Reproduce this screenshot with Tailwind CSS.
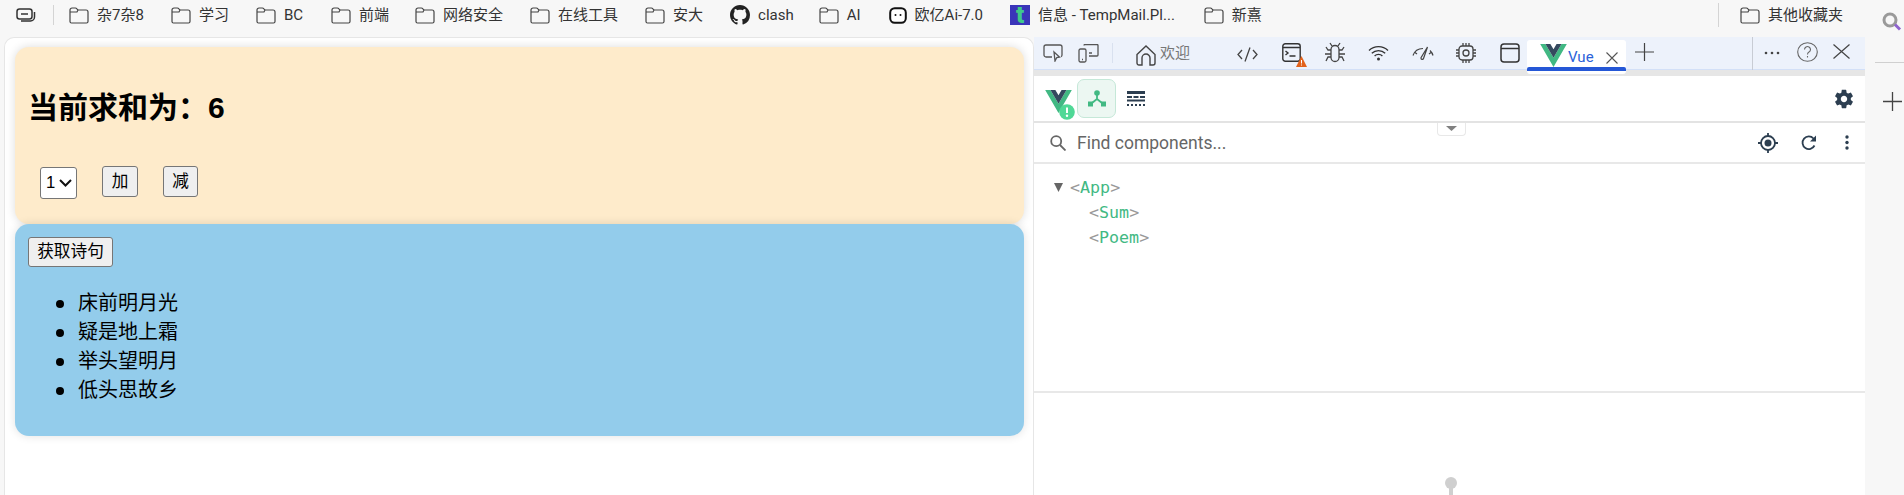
<!DOCTYPE html>
<html lang="zh-CN">
<head>
  <meta charset="UTF-8">
  <title>求和 - DevTools</title>
  <script src="https://cdn.jsdelivr.net/npm/@tailwindcss/browser@4"></script>
</head>
<body class="bg-[#f7f7f7]">
  <svg class="hidden">
    <symbol id="folder" viewBox="0 0 20 17">
      <path d="M1 5V3a2 2 0 0 1 2-2h3.300a2 2 0 0 1 1.600.8L9 3h8a2 2 0 0 1 2 2v9.500a1.500 1.500 0 0 1-1.500 1.500h-15A1.500 1.500 0 0 1 1 14.500zM1 5h7l1-2" fill="none" stroke="#444" stroke-width="1.200"/>
    </symbol>
  </svg>

  <div class="w-[1904px] h-[495px] overflow-hidden flex flex-col font-['Roboto','Noto_Sans_CJK_SC',sans-serif]">

    <!-- bookmarks -->
    <div class="h-[37px] shrink-0 flex items-center pb-[7px] text-[15px] leading-[20px] text-[#333]">
      <svg class="ml-[16px]" width="20" height="15" viewBox="0 0 20 15" fill="none" stroke="#333" stroke-width="1.500"><rect x="1" y="1" width="15" height="10" rx="2.500"/><path d="M5 6h7"/><path d="M18.500 4v5a4 4 0 0 1-4 4H5"/></svg>
      <div class="ml-[17px] w-px h-[20px] bg-[#d4d4d4]"></div>
      <div class="ml-[15px] flex items-center gap-[8px]"><svg width="20" height="17"><use href="#folder"/></svg><span>杂7杂8</span></div>
      <div class="ml-[27px] flex items-center gap-[8px]"><svg width="20" height="17"><use href="#folder"/></svg><span>学习</span></div>
      <div class="ml-[27px] flex items-center gap-[8px]"><svg width="20" height="17"><use href="#folder"/></svg><span>BC</span></div>
      <div class="ml-[28px] flex items-center gap-[8px]"><svg width="20" height="17"><use href="#folder"/></svg><span>前端</span></div>
      <div class="ml-[26px] flex items-center gap-[8px]"><svg width="20" height="17"><use href="#folder"/></svg><span>网络安全</span></div>
      <div class="ml-[27px] flex items-center gap-[8px]"><svg width="20" height="17"><use href="#folder"/></svg><span>在线工具</span></div>
      <div class="ml-[27px] flex items-center gap-[8px]"><svg width="20" height="17"><use href="#folder"/></svg><span>安大</span></div>
      <div class="ml-[27px] flex items-center gap-[8px]">
        <svg width="20" height="20" viewBox="0 0 16 16" fill="#222"><path d="M8 0C3.580 0 0 3.580 0 8c0 3.540 2.290 6.530 5.470 7.590.4.070.55-.17.55-.38 0-.19-.01-.82-.01-1.490-2.010.37-2.530-.49-2.690-.94-.09-.23-.48-.94-.82-1.130-.28-.15-.68-.52-.01-.53.63-.01 1.080.58 1.230.82.72 1.210 1.870.87 2.330.66.07-.52.28-.87.51-1.070-1.780-.2-3.640-.89-3.640-3.950 0-.87.31-1.590.82-2.150-.08-.2-.36-1.020.08-2.120 0 0 .67-.21 2.200.82.64-.18 1.320-.27 2-.27.68 0 1.360.09 2 .27 1.530-1.040 2.200-.82 2.200-.82.44 1.100.16 1.920.08 2.120.51.56.82 1.270.82 2.150 0 3.070-1.870 3.750-3.650 3.950.29.25.54.73.54 1.480 0 1.070-.01 1.930-.01 2.200 0 .21.15.46.55.38A8.013 8.013 0 0 0 16 8c0-4.420-3.580-8-8-8z"/></svg>
        <span>clash</span>
      </div>
      <div class="ml-[25px] flex items-center gap-[8px]"><svg width="20" height="17"><use href="#folder"/></svg><span>AI</span></div>
      <div class="ml-[28px] flex items-center gap-[8px]">
        <svg width="18" height="17" viewBox="0 0 18 17"><rect x="1.200" y="1.200" width="15.600" height="14.600" rx="4.500" fill="#fff" stroke="#111" stroke-width="2"/><circle cx="6.500" cy="8" r="1" fill="#111"/><circle cx="11.500" cy="8" r="1" fill="#111"/></svg>
        <span>欧亿Ai-7.0</span>
      </div>
      <div class="ml-[27px] flex items-center gap-[8px]">
        <div class="w-[20px] h-[20px] bg-[#3a35b9] flex items-center justify-center text-[#3fc98a] font-black text-[24px] leading-[20px]">t</div>
        <span>信息 - TempMail.Pl...</span>
      </div>
      <div class="ml-[29px] flex items-center gap-[8px]"><svg width="20" height="17"><use href="#folder"/></svg><span>新熹</span></div>
      <div class="ml-auto w-px h-[24px] bg-[#d4d4d4]"></div>
      <div class="ml-[21px] mr-[61px] flex items-center gap-[8px]"><svg width="20" height="17"><use href="#folder"/></svg><span>其他收藏夹</span></div>
    </div>

    <div class="flex-1 flex min-h-0">
      <!-- page -->
      <div class="ml-[4px] w-[1030px] shrink-0 bg-white border border-b-0 border-[#e6e6e6] rounded-t-[10px] pl-[10px] pt-[9px] font-['Liberation_Sans','Noto_Sans_CJK_SC',sans-serif] text-black">
        <div class="w-[1009px] h-[177px] bg-[#feebcb] rounded-[14px] shadow-[0_0_10px_rgba(0,0,0,0.14)] pl-[13px] pt-[43px]">
          <h2 class="text-[30px] leading-[36px] font-bold">当前求和为：6</h2>
          <div class="mt-[40px] ml-[12px] flex items-start text-[16.670px]">
            <div class="relative w-[37px] h-[32px] mt-[1px]">
              <select class="appearance-none w-full h-full bg-white border border-[#767676] rounded-[3px] pl-[5px] leading-[28px]"><option>1</option></select>
              <svg class="absolute right-[5px] top-[12px]" width="13" height="8" viewBox="0 0 13 8" fill="none" stroke="#111" stroke-width="2"><path d="M1 1l5.500 5.500L12 1"/></svg>
            </div>
            <button class="ml-[25px] w-[36px] h-[31px] bg-[#efefef] border border-[#767676] rounded-[3px] leading-[28px]">加</button>
            <button class="ml-[25px] w-[35px] h-[31px] bg-[#efefef] border border-[#767676] rounded-[3px] leading-[28px]">减</button>
          </div>
        </div>
        <div class="w-[1009px] h-[212px] bg-[#93cceb] rounded-[14px] shadow-[0_0_10px_rgba(0,0,0,0.12)] pl-[13px] pt-[13px]">
          <button class="block w-[85px] h-[30px] bg-[#efefef] border border-[#767676] rounded-[3px] text-[16.670px] leading-[28px]">获取诗句</button>
          <ul class="mt-[22px] pl-[28px] text-[20px] leading-[29px]">
            <li class="flex items-center gap-[14px]"><span class="w-[8px] h-[8px] rounded-full bg-black"></span>床前明月光</li>
            <li class="flex items-center gap-[14px]"><span class="w-[8px] h-[8px] rounded-full bg-black"></span>疑是地上霜</li>
            <li class="flex items-center gap-[14px]"><span class="w-[8px] h-[8px] rounded-full bg-black"></span>举头望明月</li>
            <li class="flex items-center gap-[14px]"><span class="w-[8px] h-[8px] rounded-full bg-black"></span>低头思故乡</li>
          </ul>
        </div>
      </div>

      <!-- devtools -->
      <div class="w-[831px] shrink-0 bg-white flex flex-col">
        <div class="h-[33px] shrink-0 bg-[#edf2fb] border-b border-[#d3e0f7] flex items-center text-[#444]">
          <svg class="ml-[9px]" width="20" height="18" viewBox="0 0 20 18" fill="none" stroke="#555" stroke-width="1.300"><path d="M9 13H3a2 2 0 0 1-2-2V3a2 2 0 0 1 2-2h14a2 2 0 0 1 2 2v8a2 2 0 0 1-1 1.700"/><path d="M11 8l5.500 5-2.700.5L12 17z"/></svg>
          <svg class="ml-[15px]" width="21" height="19" viewBox="0 0 21 19" fill="none" stroke="#555" stroke-width="1.300"><rect x="1" y="5" width="7" height="13" rx="1.500"/><path d="M4 15.500h1"/><path d="M6 1.500a1 1 0 0 1 1-1h12a1 1 0 0 1 1 1V11a1 1 0 0 1-1 1h-8M11 9h3"/></svg>
          <div class="ml-[13px] w-px h-[20px] bg-[#d9e1ef]"></div>
          <svg class="ml-[23px] mt-[4px]" width="20" height="21" viewBox="0 0 20 21" fill="none" stroke="#444" stroke-width="1.400"><path d="M1 9.500L10 1l9 8.500V18a2 2 0 0 1-2 2h-3v-7a3.500 3.500 0 0 0-8 0v7H3a2 2 0 0 1-2-2z"/></svg>
          <span class="ml-[4px] text-[15px] text-[#777] leading-[20px]">欢迎</span>
          <svg class="ml-[47px] mt-[3px]" width="21" height="15" viewBox="0 0 21 15" fill="none" stroke="#444" stroke-width="1.300"><path d="M5 3L1 7.500 5 12M16 3l4 4.500-4 4.500M13 .5L8 14.500"/></svg>
          <div class="ml-[24px] relative w-[25px] h-[24px] mt-[3px]">
            <svg width="19" height="19" viewBox="0 0 19 19" fill="none" stroke="#333" stroke-width="1.400"><rect x=".8" y=".8" width="17.400" height="17.400" rx="2.500"/><path d="M1 4.500h17M3.500 8l2.500 2-2.500 2M7.500 13h6"/></svg>
            <svg class="absolute left-[14px] top-[13px]" width="11" height="11" viewBox="0 0 11 11"><path d="M5.500 0L11 11H0z" fill="#e2621b"/><path d="M5.500 4v3.500M5.500 8.500v1" stroke="#fff"/></svg>
          </div>
          <svg class="ml-[17px]" width="22" height="22" viewBox="0 0 22 22" fill="none" stroke="#444" stroke-width="1.300"><path d="M7 7.500a4 4 0 0 1 8 0v8a4 4 0 0 1-8 0zM8 4L6 1M14 4l2-3M7 8H4L2 5M15 8h3l2-3M7 12H1M15 12h6M7 15H4l-2 4M15 15h3l2 4"/></svg>
          <svg class="ml-[22px]" width="21" height="16" viewBox="0 0 21 16" fill="none" stroke="#333" stroke-width="1.300"><path d="M1 5.500a13.500 13.500 0 0 1 19 0M3.800 8.300a9.500 9.500 0 0 1 13.400 0M6.600 11a5.500 5.500 0 0 1 7.800 0"/><circle cx="10.500" cy="14" r="1.500" fill="#333" stroke="none"/></svg>
          <svg class="ml-[23px]" width="22" height="15" viewBox="0 0 22 15" fill="none" stroke="#444" stroke-width="1.200"><path d="M1 9.500C2.500 5 6 2.500 11 2.500M21 9.500C20.500 7.500 19.500 6 18 4.500M3 6.500l2 1.500M19 6.500l-2 1.500M15.500 1L11.500 12.500a1.300 1.300 0 0 1-2.500-.7z"/></svg>
          <svg class="ml-[21px]" width="22" height="22" viewBox="0 0 22 22" fill="none" stroke="#444" stroke-width="1.300"><rect x="4" y="4" width="14" height="14" rx="3"/><circle cx="11" cy="11" r="3"/><path d="M8 1v3M11 1v3M14 1v3M8 18v3M11 18v3M14 18v3M1 8h3M1 11h3M1 14h3M18 8h3M18 11h3M18 14h3"/></svg>
          <svg class="ml-[23px]" width="20" height="20" viewBox="0 0 20 20" fill="none" stroke="#333" stroke-width="1.500"><rect x="1" y="1" width="18" height="18" rx="3"/><path d="M1 5.500h18"/></svg>
          <div class="ml-[7px] self-start mt-[3px] w-[99px] h-[34px] shrink-0 bg-white rounded-[3px] relative z-10 flex items-start">
            <svg class="ml-[13px] mt-[4px]" width="27" height="23" viewBox="0 0 256 221"><path d="M0 0l128 220.800L256 0h-51.200L128 132.480 50.560 0z" fill="#41b883"/><path d="M50.560 0L128 133.120 204.800 0h-47.360L128 51.200 97.920 0z" fill="#35495e"/></svg>
            <span class="ml-[1px] mt-[7px] text-[15px] leading-[20px] text-[#2b62d9]">Vue</span>
            <svg class="ml-[12px] mt-[12px]" width="12" height="12" viewBox="0 0 12 12" fill="none" stroke="#555" stroke-width="1.100"><path d="M.5.5l11 11M11.500.5l-11 11"/></svg>
            <div class="absolute left-0 right-0 top-[27px] h-[4px] bg-[#2557d6] rounded-t-[2px]"></div>
          </div>
          <svg class="ml-[9px] -mt-[3px]" width="19" height="18" viewBox="0 0 19 18" fill="none" stroke="#444" stroke-width="1.200"><path d="M9.500 0v18M0 9h19"/></svg>
          <div class="ml-[98px] w-px h-[33px] bg-[#c8ccd4]"></div>
          <svg class="ml-[11px] -mt-[1px]" width="16" height="4" viewBox="0 0 16 4" fill="#444"><circle cx="2" cy="2" r="1.300"/><circle cx="8" cy="2" r="1.300"/><circle cx="14" cy="2" r="1.300"/></svg>
          <svg class="ml-[17px] -mt-[3px]" width="21" height="20" viewBox="0 0 21 20" fill="none" stroke="#666" stroke-width="1.100"><ellipse cx="10.500" cy="10" rx="9.800" ry="9.300"/><path d="M7.500 7.500a3 3 0 1 1 4.500 2.600c-1 .6-1.500 1.200-1.500 2.400M10.500 14v1.500"/></svg>
          <svg class="ml-[15px] -mt-[3px]" width="17" height="15" viewBox="0 0 17 15" fill="none" stroke="#444" stroke-width="1.200"><path d="M.5.500l16 14M16.500.500l-16 14"/></svg>
        </div>
        <div class="h-[6px] shrink-0 bg-[#e6e6e6]"></div>

        <!-- vue toolbar -->
        <div class="h-[47px] shrink-0 border-b-2 border-[#e3e3e3] flex items-center relative">
          <div class="ml-[11px] mt-[5px] relative w-[27px] h-[23px]">
            <svg width="27" height="23" viewBox="0 0 256 221"><path d="M0 0l128 220.800L256 0h-51.200L128 132.480 50.560 0z" fill="#41b883"/><path d="M50.560 0L128 133.120 204.800 0h-47.360L128 51.200 97.920 0z" fill="#35495e"/></svg>
            <svg class="absolute left-[14px] top-[14px]" width="16" height="16" viewBox="0 0 16 16"><circle cx="8" cy="8" r="7.800" fill="#4fd896"/><path d="M8 3.500v5.500" stroke="#fff" stroke-width="2"/><circle cx="8" cy="11.800" r="1.200" fill="#fff"/></svg>
          </div>
          <div class="ml-[5px] w-[39px] h-[39px] rounded-[7px] bg-[#ecf7f2] border border-[#c5e8d8] flex items-center justify-center">
            <svg width="18" height="17" viewBox="0 0 18 17" fill="none"><circle cx="9" cy="3" r="2.800" fill="#42b983"/><path d="M9 4v5M9 9l-5 4M9 9l5 4" stroke="#42b983" stroke-width="1.800"/><rect x="0" y="11.500" width="5" height="5" fill="#42b983"/><rect x="13" y="11.500" width="5" height="5" fill="#42b983"/></svg>
          </div>
          <svg class="ml-[11px]" width="18" height="15" viewBox="0 0 18 15" fill="#2c3e50"><rect width="18" height="3"/><rect y="5" width="5" height="2"/><rect x="6.500" y="5" width="5" height="2"/><rect x="13" y="5" width="5" height="2"/><rect y="8.500" width="18" height="2"/><rect y="13" width="2" height="2"/><rect x="4" y="13" width="2" height="2"/><rect x="8" y="13" width="2" height="2"/><rect x="12" y="13" width="2" height="2"/><rect x="16" y="13" width="2" height="2"/></svg>
          <svg class="ml-auto mr-[10px]" width="22" height="22" viewBox="0 0 24 24" fill="#2c3e50"><path d="M19.430 12.980c.04-.32.070-.64.070-.98s-.03-.66-.07-.98l2.110-1.650c.19-.15.24-.42.12-.64l-2-3.460c-.12-.22-.39-.3-.61-.22l-2.490 1c-.52-.4-1.080-.73-1.690-.98l-.38-2.650A.488.488 0 0 0 14 2h-4c-.25 0-.46.18-.49.420l-.38 2.650c-.61.25-1.170.59-1.690.98l-2.490-1c-.23-.09-.49 0-.61.22l-2 3.460c-.13.22-.07.49.12.64l2.110 1.650c-.04.32-.07.65-.07.98s.03.66.07.98l-2.110 1.650c-.19.15-.24.42-.12.64l2 3.460c.12.22.39.3.61.22l2.490-1c.52.4 1.080.73 1.690.98l.38 2.650c.03.24.24.42.49.42h4c.25 0 .46-.18.49-.42l.38-2.650c.61-.25 1.170-.59 1.690-.98l2.490 1c.23.09.49 0 .61-.22l2-3.460c.12-.22.07-.49-.12-.64zM12 15.500c-1.930 0-3.500-1.570-3.500-3.500s1.570-3.500 3.500-3.500 3.500 1.570 3.500 3.500-1.570 3.500-3.500 3.500z"/></svg>
          <div class="absolute left-[403px] top-[47px] w-[29px] h-[13px] bg-white border border-t-0 border-[#e8e8e8] rounded-b-[4px] flex justify-center pt-[3px] z-10">
            <svg width="11" height="5" viewBox="0 0 11 5"><path d="M0 0h11L5.500 5z" fill="#808080"/></svg>
          </div>
        </div>

        <!-- search -->
        <div class="h-[41px] shrink-0 border-b-2 border-[#e8e8e8] flex items-center">
          <svg class="ml-[16px]" width="16" height="16" viewBox="0 0 16 16" fill="none" stroke="#666" stroke-width="1.800"><circle cx="6.200" cy="6.200" r="5"/><path d="M10 10l5.500 5.500"/></svg>
          <span class="ml-[11px] pt-[1px] font-['Roboto',sans-serif] text-[17.500px] leading-[24px] text-[#666]">Find components...</span>
          <svg class="ml-auto" width="20" height="20" viewBox="0 0 20 20" fill="none" stroke="#2c3e50" stroke-width="1.800"><circle cx="10" cy="10" r="7"/><circle cx="10" cy="10" r="3.500" fill="#2c3e50" stroke="none"/><path d="M10 0v3M10 17v3M0 10h3M17 10h3"/></svg>
          <svg class="ml-[23px]" width="16" height="16" viewBox="0 0 16 16" fill="none" stroke="#2c3e50" stroke-width="1.800"><path d="M13.500 10.500A6.300 6.300 0 1 1 12.500 3.500L14 5"/><path d="M15 .5v6H9z" fill="#2c3e50" stroke="none"/></svg>
          <svg class="ml-[28px] mr-[16px]" width="4" height="15" viewBox="0 0 4 15" fill="#2c3e50"><circle cx="2" cy="2" r="1.700"/><circle cx="2" cy="7.500" r="1.700"/><circle cx="2" cy="13" r="1.700"/></svg>
        </div>

        <!-- tree -->
        <div class="h-[229px] shrink-0 border-b-2 border-[#e8e8e8] pt-[11px] font-['DejaVu_Sans_Mono',monospace] text-[16.670px] leading-[25px] text-[#999]">
          <div class="flex items-center"><svg class="ml-[20px] mr-[7px]" width="9" height="9" viewBox="0 0 9 9"><path d="M0 0h9L4.500 9z" fill="#666"/></svg><span>&lt;<span class="text-[#42b983]">App</span>&gt;</span></div>
          <div class="pl-[55px]">&lt;<span class="text-[#42b983]">Sum</span>&gt;</div>
          <div class="pl-[55px]">&lt;<span class="text-[#42b983]">Poem</span>&gt;</div>
        </div>

        <div class="flex-1 flex flex-col items-center pt-[84px] pl-[3px]">
          <div class="w-[12px] h-[12px] rounded-full bg-[#cfcfcf] shrink-0"></div>
          <div class="w-[4px] flex-1 -mt-[1px] bg-[#cfcfcf]"></div>
        </div>
      </div>

      <!-- sidebar -->
      <div class="w-[39px] shrink-0 relative">
        <svg class="absolute left-[17px] -top-[25px]" width="20" height="19" viewBox="0 0 20 19" fill="none"><circle cx="8" cy="8" r="6" stroke="#9a9a9a" stroke-width="3"/><path d="M13 12.500l5 5" stroke="#8e63ce" stroke-width="3"/></svg>
        <div class="ml-[10px] mt-[25px] h-px bg-[#d0d0d0]"></div>
        <svg class="ml-[18px] mt-[29px]" width="19" height="19" viewBox="0 0 19 19" fill="none" stroke="#444" stroke-width="1.300"><path d="M9.500 0v19M0 9.500h19"/></svg>
      </div>
    </div>
  </div>
</body>
</html>
